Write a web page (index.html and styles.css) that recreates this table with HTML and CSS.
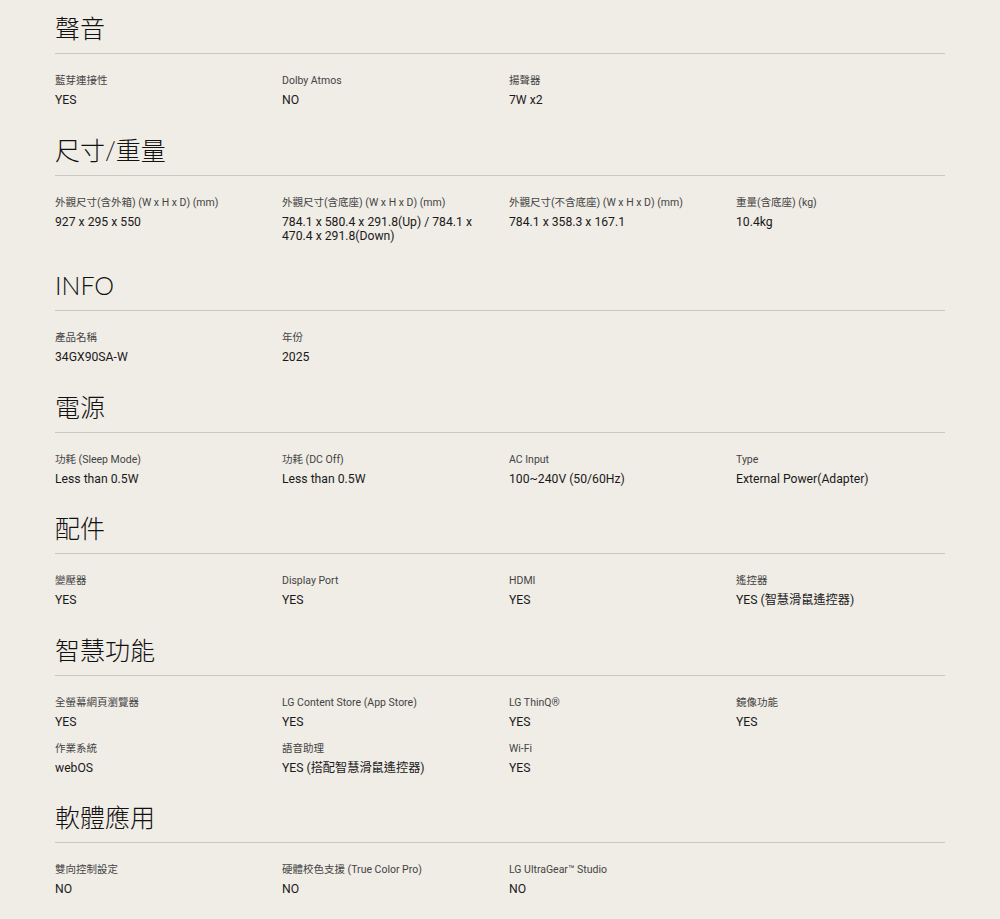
FILE: index.html
```html
<!DOCTYPE html>
<html lang="zh-Hant">
<head>
    <meta charset="UTF-8">
    <meta name="viewport" content="width=device-width, initial-scale=1.0">
    <title>規格</title>
    <link rel="stylesheet" href="styles.css">
</head>
<body>
    <div class="specs">
        <section class="spec-group">
            <h2 class="spec-title">聲音</h2>
            <div class="spec-grid">
                <div class="spec-item"><div class="spec-label">藍芽連接性</div><div class="spec-value">YES</div></div>
                <div class="spec-item"><div class="spec-label">Dolby Atmos</div><div class="spec-value">NO</div></div>
                <div class="spec-item"><div class="spec-label">揚聲器</div><div class="spec-value">7W x2</div></div>
            </div>
        </section>

        <section class="spec-group">
            <h2 class="spec-title">尺寸/重量</h2>
            <div class="spec-grid">
                <div class="spec-item"><div class="spec-label">外觀尺寸(含外箱) (W x H x D) (mm)</div><div class="spec-value">927 x 295 x 550</div></div>
                <div class="spec-item"><div class="spec-label">外觀尺寸(含底座) (W x H x D) (mm)</div><div class="spec-value">784.1 x 580.4 x 291.8(Up) / 784.1 x 470.4 x 291.8(Down)</div></div>
                <div class="spec-item"><div class="spec-label">外觀尺寸(不含底座) (W x H x D) (mm)</div><div class="spec-value">784.1 x 358.3 x 167.1</div></div>
                <div class="spec-item"><div class="spec-label">重量(含底座) (kg)</div><div class="spec-value">10.4kg</div></div>
            </div>
        </section>

        <section class="spec-group">
            <h2 class="spec-title">INFO</h2>
            <div class="spec-grid">
                <div class="spec-item"><div class="spec-label">產品名稱</div><div class="spec-value">34GX90SA-W</div></div>
                <div class="spec-item"><div class="spec-label">年份</div><div class="spec-value">2025</div></div>
            </div>
        </section>

        <section class="spec-group">
            <h2 class="spec-title">電源</h2>
            <div class="spec-grid">
                <div class="spec-item"><div class="spec-label">功耗 (Sleep Mode)</div><div class="spec-value">Less than 0.5W</div></div>
                <div class="spec-item"><div class="spec-label">功耗 (DC Off)</div><div class="spec-value">Less than 0.5W</div></div>
                <div class="spec-item"><div class="spec-label">AC Input</div><div class="spec-value">100~240V (50/60Hz)</div></div>
                <div class="spec-item"><div class="spec-label">Type</div><div class="spec-value">External Power(Adapter)</div></div>
            </div>
        </section>

        <section class="spec-group">
            <h2 class="spec-title">配件</h2>
            <div class="spec-grid">
                <div class="spec-item"><div class="spec-label">變壓器</div><div class="spec-value">YES</div></div>
                <div class="spec-item"><div class="spec-label">Display Port</div><div class="spec-value">YES</div></div>
                <div class="spec-item"><div class="spec-label">HDMI</div><div class="spec-value">YES</div></div>
                <div class="spec-item"><div class="spec-label">遙控器</div><div class="spec-value">YES (智慧滑鼠遙控器)</div></div>
            </div>
        </section>

        <section class="spec-group">
            <h2 class="spec-title">智慧功能</h2>
            <div class="spec-grid">
                <div class="spec-item"><div class="spec-label">全螢幕網頁瀏覽器</div><div class="spec-value">YES</div></div>
                <div class="spec-item"><div class="spec-label">LG Content Store (App Store)</div><div class="spec-value">YES</div></div>
                <div class="spec-item"><div class="spec-label">LG ThinQ®</div><div class="spec-value">YES</div></div>
                <div class="spec-item"><div class="spec-label">鏡像功能</div><div class="spec-value">YES</div></div>
                <div class="spec-item"><div class="spec-label">作業系統</div><div class="spec-value">webOS</div></div>
                <div class="spec-item"><div class="spec-label">語音助理</div><div class="spec-value">YES (搭配智慧滑鼠遙控器)</div></div>
                <div class="spec-item"><div class="spec-label">Wi-Fi</div><div class="spec-value">YES</div></div>
            </div>
        </section>

        <section class="spec-group">
            <h2 class="spec-title">軟體應用</h2>
            <div class="spec-grid">
                <div class="spec-item"><div class="spec-label">雙向控制設定</div><div class="spec-value">NO</div></div>
                <div class="spec-item"><div class="spec-label">硬體校色支援 (True Color Pro)</div><div class="spec-value">NO</div></div>
                <div class="spec-item"><div class="spec-label">LG UltraGear™ Studio</div><div class="spec-value">NO</div></div>
            </div>
        </section>
    </div>
</body>
</html>
```

FILE: styles.css
```css
body {
    margin: 0;
    background-color: #f0ece6;
    font-family: Roboto, "Noto Sans CJK TC", sans-serif;
    color: #1a1a1a;
}
.specs {
    width: 890px;
    margin-left: 55px;
    padding-top: 12px;
}
.spec-group {
    margin-bottom: 26.5px;
}
.spec-title {
    margin: 0;
    padding-bottom: 9px;
    border-bottom: 1px solid #cbc7c1;
    font-family: Lato, "Noto Sans CJK TC", sans-serif;
    font-size: 25px;
    line-height: 32px;
    font-weight: 300;
    color: #111;
}
.spec-grid {
    display: grid;
    grid-template-columns: 227px 227px 227px 1fr;
    row-gap: 12px;
    margin-top: 19px;
}
.spec-item {
    padding-right: 20px;
}
.spec-label {
    font-size: 10.5px;
    line-height: 16px;
    margin-bottom: 4px;
    color: #444;
}
.spec-value {
    font-size: 12.2px;
    line-height: 14px;
    color: #1a1a1a;
}
```
